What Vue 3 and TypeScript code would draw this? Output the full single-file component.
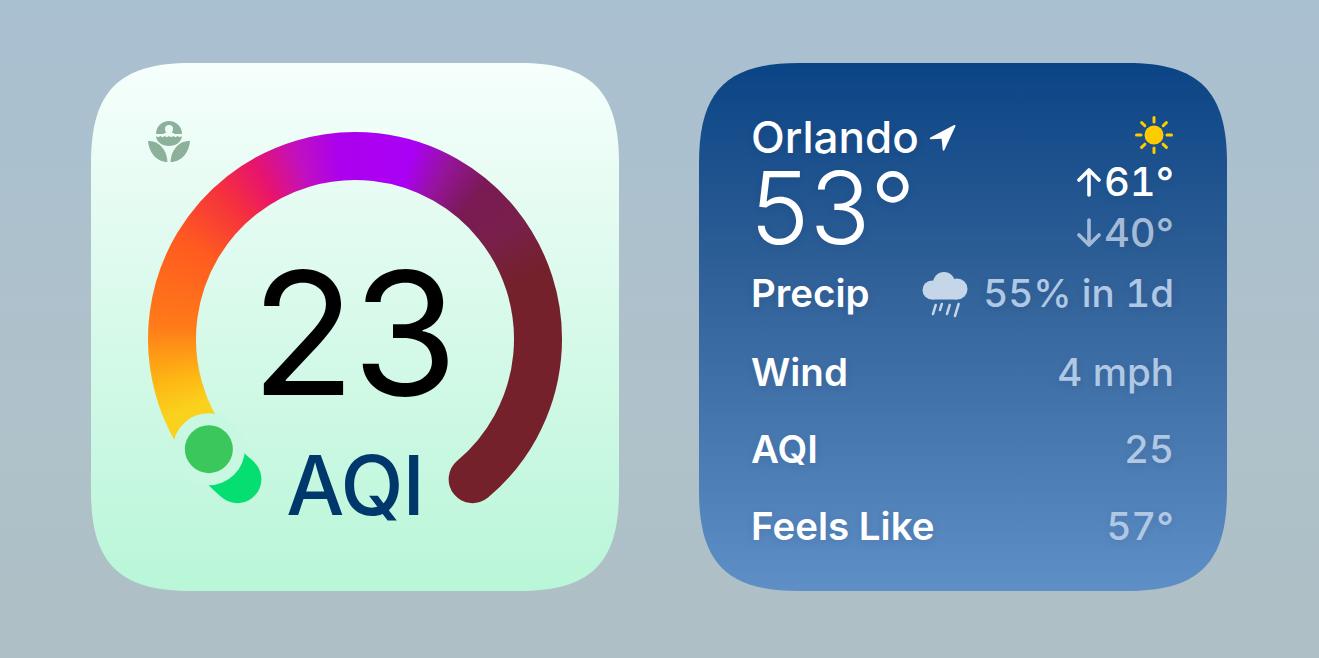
<script setup lang="ts">
import { computed } from 'vue'

const cx = 264
const cy = 276
const r = 183

// clock angle (0 = top), in degrees
const pt = (deg: number) => {
  const a = (deg * Math.PI) / 180
  return { x: cx + r * Math.sin(a), y: cy - r * Math.cos(a) }
}

const arc = (from: number, to: number) => {
  const a = pt(from)
  const b = pt(to)
  const large = to - from > 180 ? 1 : 0
  return `M${a.x.toFixed(2)} ${a.y.toFixed(2)}A${r} ${r} 0 ${large} 1 ${b.x.toFixed(2)} ${b.y.toFixed(2)}`
}

const fullArc = arc(-127, 140)
const greenArc = arc(-140, -127)

const stops: [number, string][] = [
  [200, '#fbd31c'],
  [247, '#fad21e'],
  [257, '#fdb814'],
  [274, '#ff7a18'],
  [300, '#ff5a20'],
  [318, '#f5303e'],
  [330, '#e8146c'],
  [343, '#c010c0'],
  [355, '#ac00ee'],
  [377, '#aa00f5'],
  [388, '#95149a'],
  [400, '#7a1a55'],
  [415, '#78204a'],
  [430, '#74212c'],
  [560, '#74212c'],
]

const conic = computed(() => {
  const parts = stops.map(([deg, color]) => `${color} ${deg - 200}deg`)
  return { background: `conic-gradient(from 200deg at 50% 50%, ${parts.join(', ')})` }
})

const dot = pt(-127)

const rows = [
  { label: 'Wind', value: '4 mph' },
  { label: 'AQI', value: '25' },
  { label: 'Feels Like', value: '57°' },
]

const rays = [0, 45, 90, 135, 180, 225, 270, 315]
const drops = [
  { x: 11, y: 33, h: 9 },
  { x: 18, y: 32, h: 6 },
  { x: 25, y: 33, h: 9 },
  { x: 33, y: 32, h: 12 },
]
</script>

<template>
  <main class="page">
    <section class="card aqi">
      <svg class="gauge" width="528" height="528" viewBox="0 0 528 528">
        <defs>
          <mask id="ring" maskUnits="userSpaceOnUse" x="0" y="0" width="528" height="528">
            <path :d="fullArc" fill="none" stroke="#fff" stroke-width="48" stroke-linecap="round" />
          </mask>
        </defs>
        <g mask="url(#ring)">
          <foreignObject x="0" y="12" width="528" height="528">
            <div class="conic" :style="conic"></div>
          </foreignObject>
        </g>
        <path :d="greenArc" fill="none" stroke="#05df72" stroke-width="48" stroke-linecap="round" />
        <circle :cx="dot.x" :cy="dot.y" r="36" fill="#c8f8e2" />
        <circle :cx="dot.x" :cy="dot.y" r="24" fill="#3cc75c" />
        <g transform="translate(57 57)" fill="#8db09a">
          <path d="M8 14a13 13 0 0 1 26 0z" />
          <circle cx="21" cy="9" r="4" fill="#effff8" />
          <path d="M21 11l-6 3h12z" fill="#effff8" />
          <path d="M8 16c2.200 1.500 2.200 1.500 4.300 0 2.200 1.500 2.200 1.500 4.400 0 2.200 1.500 2.200 1.500 4.300 0 2.200 1.500 2.200 1.500 4.300 0 2.200 1.500 2.200 1.500 4.400 0 2.200 1.500 2.200 1.500 4.300 0-.5 6-6 10-13 10s-12.500-4-13-10z" />
          <path d="M0 21c10-1 19 8 19.500 21C8 42 1 32 0 21z" />
          <path d="M42 21c-10-1-19 8-19.500 21C34 42 41 32 42 21z" />
        </g>
      </svg>
      <div class="aqi-text">
        <div class="value">23</div>
        <div class="unit">AQI</div>
      </div>
    </section>

    <section class="card weather">
      <header class="top">
        <div class="place">
          <div class="city">
            Orlando
            <svg width="28" height="28" viewBox="0 0 30 30">
              <path d="M1.500 15.500 27 2.200c1-.5 1.700.3 1.300 1.300L16.500 29c-.5 1-1.700.8-1.800-.3L13.500 16.800 2 17.500c-1.200.1-1.500-1.400-.5-2z" fill="#fff" />
            </svg>
          </div>
          <div class="temp">53°</div>
        </div>
        <div class="range">
          <svg class="sun" width="38" height="38" viewBox="0 0 38 38">
            <circle cx="19" cy="19" r="9.500" fill="#ffcc00" />
            <line
              v-for="deg in rays"
              :key="deg"
              x1="19"
              y1="1.500"
              x2="19"
              y2="6"
              stroke="#ffcc00"
              stroke-width="3"
              stroke-linecap="round"
              :transform="`rotate(${deg} 19 19)`"
            />
          </svg>
          <div class="hi">
            <svg width="24" height="30" viewBox="0 0 24 30">
              <path d="M12 28V3M2 13 12 3l10 10" fill="none" stroke="currentColor" stroke-width="3.600" stroke-linecap="round" stroke-linejoin="round" />
            </svg>
            61°
          </div>
          <div class="lo">
            <svg width="24" height="30" viewBox="0 0 24 30">
              <path d="M12 2v25M2 17l10 10 10-10" fill="none" stroke="currentColor" stroke-width="3.600" stroke-linecap="round" stroke-linejoin="round" />
            </svg>
            40°
          </div>
        </div>
      </header>

      <div class="rows">
        <div class="row">
          <span class="label">Precip</span>
          <span class="val precip">
            <svg class="cloud" width="46" height="46" viewBox="0 0 46 46" fill="#c5d6e8">
              <circle cx="10" cy="18" r="9.500" />
              <circle cx="22" cy="11" r="11" />
              <circle cx="35" cy="17" r="10.500" />
              <rect x="10" y="14" width="25" height="13.500" />
              <line
                v-for="d in drops"
                :key="d.x"
                :x1="d.x + d.h * 0.3"
                :y1="d.y"
                :x2="d.x"
                :y2="d.y + d.h"
                stroke="#c5d6e8"
                stroke-width="2.600"
                stroke-linecap="round"
              />
            </svg>
            55% in 1d
          </span>
        </div>
        <div v-for="row in rows" :key="row.label" class="row">
          <span class="label">{{ row.label }}</span>
          <span class="val">{{ row.value }}</span>
        </div>
      </div>
    </section>
  </main>
</template>

<style>
html,
body {
  margin: 0;
  background: #aec1cc;
}
</style>

<style scoped>
.page {
  width: 1319px;
  height: 658px;
  box-sizing: border-box;
  padding: 63px 92px 67px 91px;
  display: flex;
  gap: 80px;
  overflow: hidden;
  background: linear-gradient(180deg, #a9c0d1 0%, #afc1ca 60%, #aec0c5 100%);
  font-family: Inter, "Liberation Sans", sans-serif;
}

/* continuous corners, a plain border-radius looks too round */
.card {
  width: 528px;
  height: 528px;
  clip-path: path("M100 0H428C500 0 528 28 528 100V428C528 500 500 528 428 528H100C28 528 0 500 0 428V100C0 28 28 0 100 0Z");
  position: relative;
  box-sizing: border-box;
  flex: none;
}

.aqi {
  background: linear-gradient(180deg, #f6fffc 0%, #e3fbf1 30%, #b9f6d8 100%);
}

.gauge {
  position: absolute;
  left: 0;
  top: 0;
}

.conic {
  width: 528px;
  height: 528px;
}

.aqi-text {
  position: relative;
  display: flex;
  flex-direction: column;
  align-items: center;
  padding-top: 195px;
  padding-right: 4px;
}

.value {
  font-size: 171px;
  font-weight: 400;
  line-height: 150px;
  color: #000;
  letter-spacing: -3px;
}

.unit {
  font-size: 82px;
  font-weight: 500;
  line-height: 90px;
  color: #00386c;
  margin-top: 33px;
  margin-left: 4px;
  letter-spacing: -1px;
}

.weather {
  background: linear-gradient(180deg, #0b4485 0%, #2f6097 40%, #5e8fc6 100%);
  color: #fff;
  padding: 51px 53px 0 52px;
  text-shadow: 0 2px 8px rgba(0, 30, 70, 0.1);
}

.top {
  display: flex;
  justify-content: space-between;
}

.city {
  display: flex;
  align-items: center;
  gap: 10px;
  font-size: 44px;
  font-weight: 500;
  line-height: 46px;
}

.temp {
  font-size: 100px;
  font-weight: 300;
  line-height: 95px;
  margin-left: -1px;
  letter-spacing: 0.5px;
}

.range {
  display: flex;
  flex-direction: column;
  align-items: flex-end;
  font-size: 40px;
  font-weight: 500;
  font-variant-numeric: tabular-nums;
}

.sun {
  margin: 2px 1px 0 0;
}

.hi,
.lo {
  display: flex;
  align-items: center;
  gap: 3px;
  line-height: 46px;
}

.hi {
  margin-top: 5px;
}

.lo {
  color: #a3bbd6;
  margin-top: 5px;
}

.rows {
  display: grid;
  grid-template-rows: 81px 77px 77px 77px;
  margin-top: -4px;
}

.row {
  display: flex;
  justify-content: space-between;
  align-items: center;
  font-size: 38.500px;
  line-height: 44px;
}

.label {
  font-weight: 600;
}

.val {
  font-weight: 500;
  font-size: 38.600px;
  font-variant-numeric: tabular-nums;
  color: #b0c8e4;
  display: flex;
  align-items: center;
}

.precip {
  gap: 15px;
}

.cloud {
  margin-top: 4px;
}
</style>
